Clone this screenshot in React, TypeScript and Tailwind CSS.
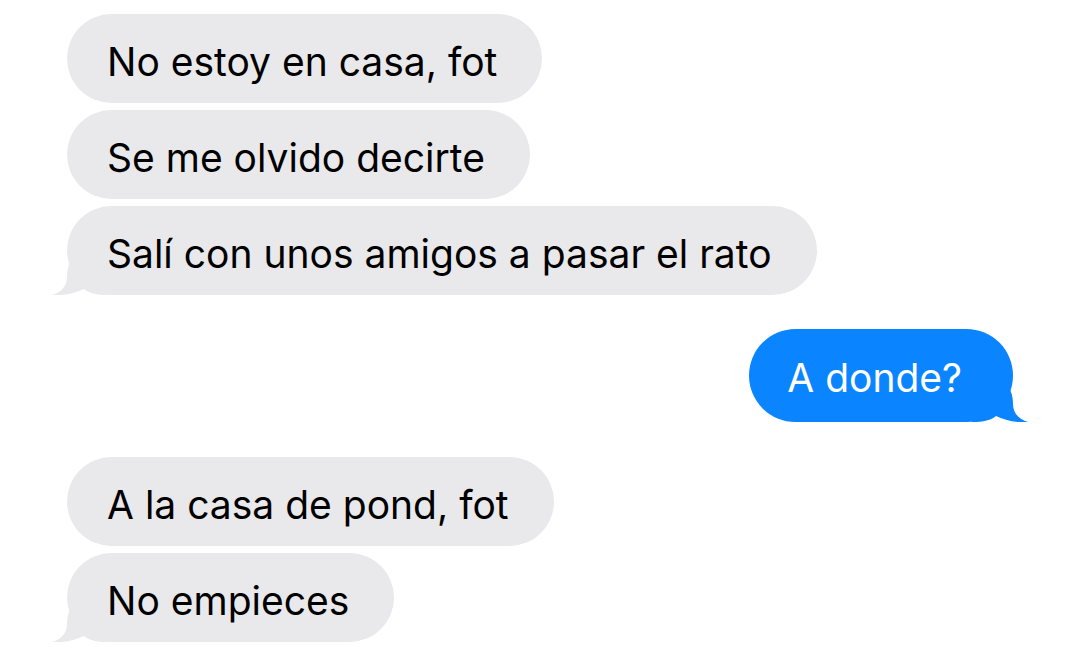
import type { ReactNode } from 'react';

type Msg = { id: number; text: string; mine?: boolean; tail?: boolean; gapTop?: string };

const messages: Msg[] = [
    { id: 1, text: 'No estoy en casa, fot' },
    { id: 2, text: 'Se me olvido decirte' },
    { id: 3, text: 'Salí con unos amigos a pasar el rato', tail: true },
    { id: 4, text: 'A donde?', mine: true, tail: true, gapTop: 'mt-[27px]' },
    { id: 5, text: 'A la casa de pond, fot', gapTop: 'mt-[28px]' },
    { id: 6, text: 'No empieces', tail: true },
];

// Little hook at the bottom corner of the last bubble in a group
const Tail = ({ mine }: { mine?: boolean }) => (
    <svg
        width="56"
        height="36"
        viewBox="0 0 56 36"
        className={mine ? 'absolute bottom-0 right-[-15px] -scale-x-100' : 'absolute bottom-0 left-[-15px]'}
        fill={mine ? '#0a84ff' : '#e9e9eb'}
    >
        <path d="M20 0 C16.5 5 15 11 15 18 C15 28 8 34 0 36 C12 37 24 34 32 30 C37 34 44 36 56 36 L56 0 Z" />
    </svg>
);

const Bubble = ({ msg, children }: { msg: Msg; children: ReactNode }) => (
    <div className={`relative ${msg.mine ? 'self-end' : 'self-start'} ${msg.gapTop ?? ''}`}>
        {msg.tail && <Tail mine={msg.mine} />}
        <div
            className={
                msg.mine
                    ? 'relative flex h-[93px] items-center rounded-[47px] bg-[#0a84ff] pl-[38px] pr-[51px] pt-[4px] text-white'
                    : 'relative flex h-[89px] items-center rounded-[45px] bg-[#e9e9eb] pl-[40px] pr-[45px] pt-[6px] text-black'
            }
        >
            <span className="whitespace-nowrap text-[39px] leading-none">{children}</span>
        </div>
    </div>
);

export default function App() {
    return (
        <div
            className="flex h-[650px] w-[1080px] flex-col gap-[7px] overflow-hidden bg-white px-[67px] pt-[14px]"
            style={{ fontFamily: 'Inter, "Noto Sans", sans-serif' }}
        >
            {messages.map((m) => (
                <Bubble key={m.id} msg={m}>
                    {m.text}
                </Bubble>
            ))}
        </div>
    );
}
